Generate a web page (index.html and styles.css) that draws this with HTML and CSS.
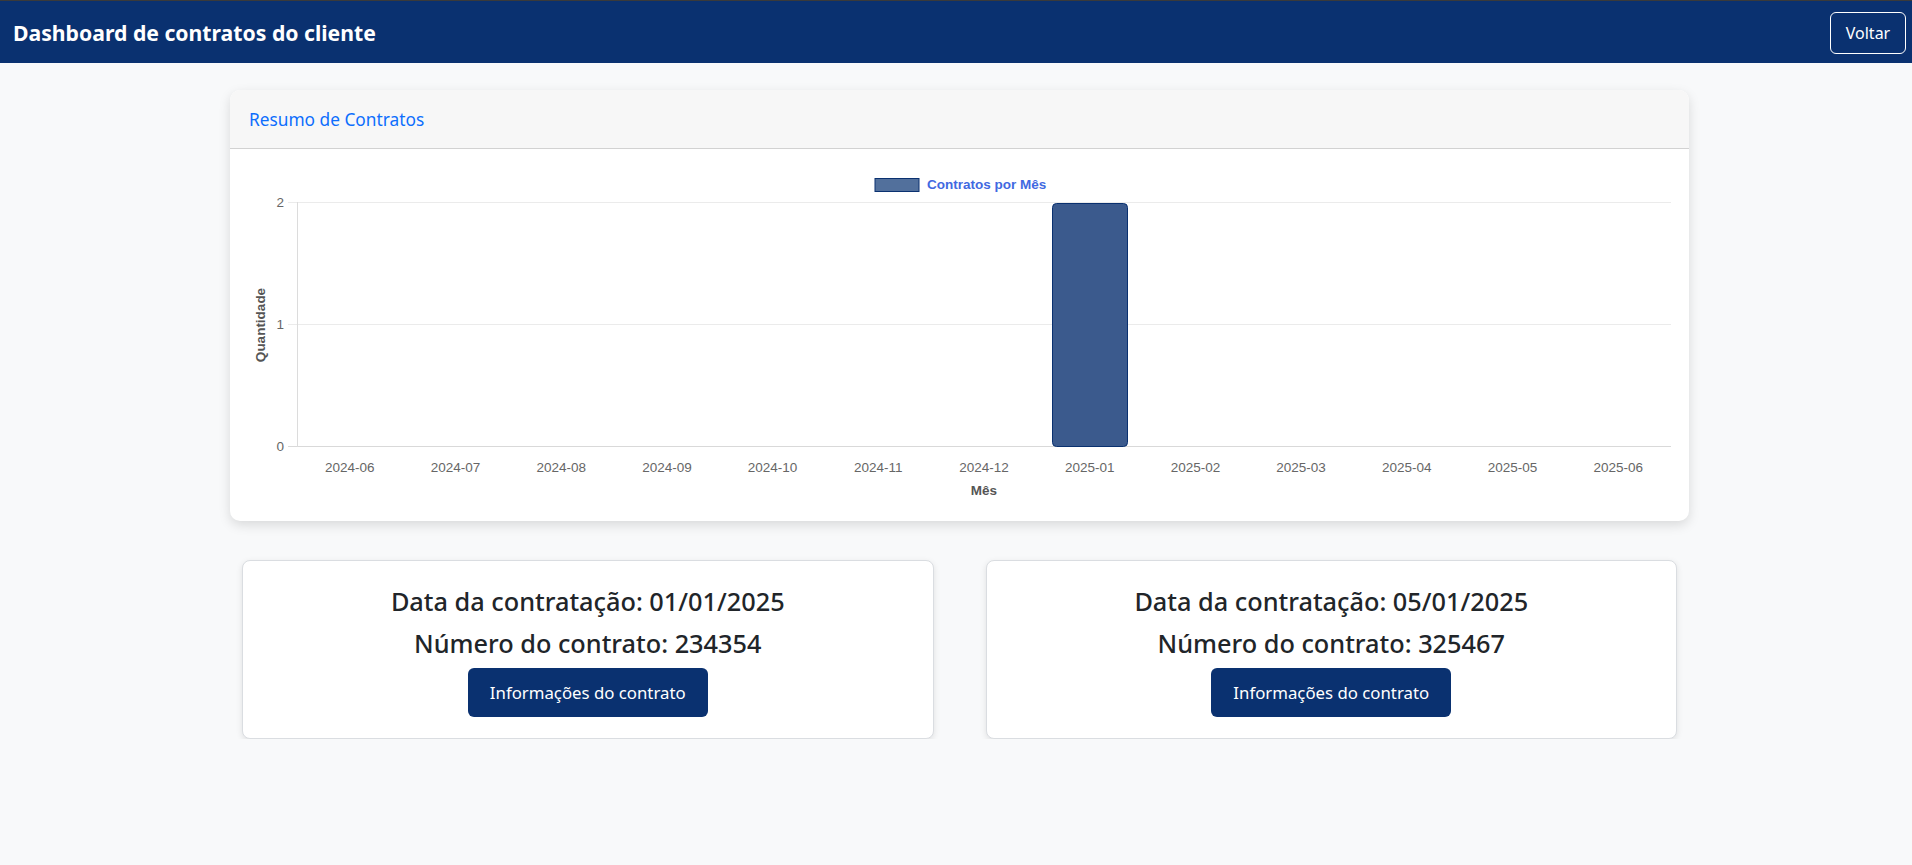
FILE: index.html
```html
<!DOCTYPE html>
<html lang="pt-BR">
<head>
<meta charset="utf-8">
<title>Dashboard de contratos do cliente</title>
<link rel="stylesheet" href="styles.css">
</head>
<body>
<header class="topbar">
  <h1 class="brand">Dashboard de contratos do cliente</h1>
  <button class="btn-back" type="button">Voltar</button>
</header>
<main class="content">
  <section class="summary-card">
    <div class="summary-head"><h2 class="summary-title">Resumo de Contratos</h2></div>
    <div class="summary-body">
      <svg class="chart" viewBox="230 150 1459 372" width="1459" height="372" xmlns="http://www.w3.org/2000/svg">
        <g class="legend">
          <rect x="875" y="179.5" width="44" height="13" fill="#52709c" stroke="#0a3170" stroke-width="1"/>
          <text x="927" y="190" class="legend-text">Contratos por Mês</text>
        </g>
        <g class="grid">
          <line x1="288" y1="203.5" x2="1671" y2="203.5" stroke="#ebebeb"/>
          <line x1="288" y1="325.5" x2="1671" y2="325.5" stroke="#ebebeb"/>
          <line x1="288" y1="447.5" x2="1671" y2="447.5" stroke="#d9d9d9"/>
          <line x1="297.5" y1="203" x2="297.5" y2="448" stroke="#dcdcdc"/>
        </g>
        <g class="ylabels">
          <text x="284" y="208.3">2</text>
          <text x="284" y="330.3">1</text>
          <text x="284" y="452.3">0</text>
        </g>
        <rect x="1052.5" y="204.5" width="75" height="243" rx="4" fill="#3b5a8d" stroke="#0a3170" stroke-width="1"/>
        <g class="xlabels">
          <text x="349.8" y="472.8">2024-06</text>
          <text x="455.5" y="472.8">2024-07</text>
          <text x="561.2" y="472.8">2024-08</text>
          <text x="666.9" y="472.8">2024-09</text>
          <text x="772.6" y="472.8">2024-10</text>
          <text x="878.3" y="472.8">2024-11</text>
          <text x="984" y="472.8">2024-12</text>
          <text x="1089.7" y="472.8">2025-01</text>
          <text x="1195.4" y="472.8">2025-02</text>
          <text x="1301.1" y="472.8">2025-03</text>
          <text x="1406.8" y="472.8">2025-04</text>
          <text x="1512.5" y="472.8">2025-05</text>
          <text x="1618.2" y="472.8">2025-06</text>
        </g>
        <text x="984" y="495.8" class="axis-title">Mês</text>
        <text class="axis-title" transform="translate(265 326) rotate(-90)">Quantidade</text>
      </svg>
    </div>
  </section>
  <section class="contracts">
    <article class="contract-card">
      <h3 class="contract-line">Data da contratação: 01/01/2025</h3>
      <h3 class="contract-line">Número do contrato: 234354</h3>
      <button class="btn-info" type="button">Informações do contrato</button>
    </article>
    <article class="contract-card">
      <h3 class="contract-line">Data da contratação: 05/01/2025</h3>
      <h3 class="contract-line">Número do contrato: 325467</h3>
      <button class="btn-info" type="button">Informações do contrato</button>
    </article>
  </section>
</main>
</body>
</html>
```
FILE: styles.css
```css
* { box-sizing: border-box; }

body {
  margin: 0;
  background: #f8f9fa;
  font-family: "Noto Sans", "Open Sans", sans-serif;
  color: #212529;
}

.topbar {
  height: 63px;
  border-top: 1px solid #3a3a3a;
  background: #0a3170;
  display: flex;
  align-items: center;
  justify-content: space-between;
  padding: 0 6px 0 13px;
}

.brand {
  margin: 0;
  color: #fff;
  font-size: 21.2px;
  font-weight: 700;
  letter-spacing: 0;
}

.btn-back {
  width: 76px;
  height: 42px;
  margin-top: 1px;
  background: transparent;
  border: 1px solid #fff;
  border-radius: 6px;
  color: #fff;
  font-family: inherit;
  font-size: 16px;
  padding: 0;
}

.content {
  width: 1459px;
  margin: 27px 0 0 230px;
}

.summary-card {
  background: #fff;
  border-radius: 10px;
  overflow: hidden;
  box-shadow: 0 4px 12px rgba(0, 0, 0, 0.13);
}

.summary-head {
  height: 59px;
  background: #f7f7f7;
  border-bottom: 1px solid #d2d2d2;
  display: flex;
  align-items: center;
  padding-left: 19px;
}

.summary-title {
  margin: 0;
  font-size: 17.3px;
  font-weight: 400;
  color: #0d6efd;
}

.summary-body {
  height: 372px;
}

.chart {
  display: block;
  font-family: "Liberation Sans", Arial, sans-serif;
}

.legend-text {
  font-size: 13.5px;
  font-weight: 700;
  fill: #4169e1;
}

.ylabels text {
  font-size: 13.5px;
  fill: #666;
  text-anchor: end;
}

.xlabels text {
  font-size: 13.5px;
  fill: #666;
  text-anchor: middle;
}

.axis-title {
  font-size: 13.5px;
  font-weight: 700;
  fill: #555;
  text-anchor: middle;
}

.contracts {
  margin: 39px 12px 0;
  display: grid;
  grid-template-columns: 1fr 1fr;
  gap: 52px;
}

.contract-card {
  background: #fff;
  border: 1px solid #dadde1;
  border-radius: 8px;
  box-shadow: 0 2px 6px rgba(0, 0, 0, 0.1);
  padding: 24px 16px 21px;
  text-align: center;
}

.contract-line {
  margin: 0 0 8px;
  font-size: 25.3px;
  line-height: 33.6px;
  font-weight: 500;
}

.btn-info {
  height: 49px;
  padding: 0 22px;
  background: #0a3170;
  border: none;
  border-radius: 6px;
  color: #fff;
  font-family: inherit;
  font-size: 16.8px;
}
```
